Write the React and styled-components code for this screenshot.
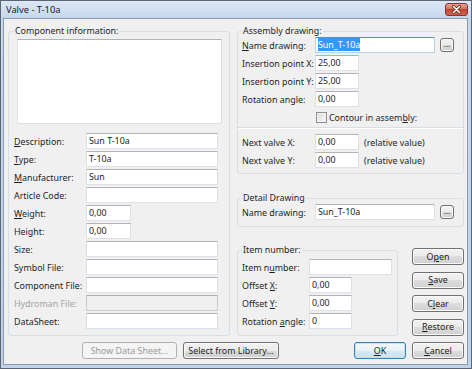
import styled, { createGlobalStyle } from 'styled-components';

const GlobalStyle = createGlobalStyle`
  html, body { margin: 0; padding: 0; background: #ffffff; }
  #root { width: 472px; height: 369px; }
`;

const Window = styled.div`
  box-sizing: border-box;
  width: 472px;
  height: 369px;
  display: flex;
  flex-direction: column;
  border: 1px solid #5b6573;
  background: linear-gradient(#dce7f4, #c6d7ec 18px, #bfd2ea);
  font-family: "Noto Sans", "Liberation Sans", sans-serif;
  font-size: 8.9px;
  color: #1e1e1e;
  overflow: hidden;
`;

const TitleBar = styled.div`
  height: 17px;
  flex: none;
  display: flex;
  align-items: flex-start;
  justify-content: space-between;
  padding: 0 3px 0 5px;
`;

const Title = styled.span`
  font-size: 9.3px;
  line-height: 17px;
  color: #1a1a1a;
`;

const CloseButton = styled.div`
  margin-top: 2px;
  width: 23px;
  height: 13px;
  box-sizing: border-box;
  border: 1px solid #83342c;
  border-radius: 3px;
  background: linear-gradient(#e8a493, #d46a57 50%, #c3432f 50%, #d0664f);
  display: flex;
  align-items: center;
  justify-content: center;
`;

const Client = styled.div`
  flex: 1;
  min-height: 0;
  margin: 0 3px 3px 2px;
  border: 1px solid #8a9bb0;
  background: #f0f0f0;
  padding: 6px 3px 5px 4px;
  display: flex;
  flex-direction: column;
`;

const TopArea = styled.div`
  flex: 1;
  display: flex;
  gap: 7px;
`;

const RightColumn = styled.div`
  flex: 1;
  display: flex;
  flex-direction: column;
`;

const Group = styled.fieldset`
  margin: ${p => p.$mt || 0}px 0 0 0;
  padding: 0;
  min-width: 0;
  box-sizing: border-box;
  width: ${p => (p.$w ? `${p.$w}px` : 'auto')};
  flex: ${p => (p.$grow ? 1 : 'none')};
  border: 1px solid #d5dfe5;
  border-radius: 3px;
`;

const Legend = styled.legend`
  margin-left: ${p => p.$offset}px;
  padding: 0 1px;
  line-height: 12px;
`;

const GroupBody = styled.div`
  padding: ${p => p.$pad};
  display: flex;
  flex-direction: column;
`;

const InfoBox = styled.div`
  margin: 0 0 9px 3px;
  width: 205px;
  height: 85px;
  box-sizing: border-box;
  background: #fff;
  border: 1px solid #dde1e7;
  border-top-color: #b0b3ba;
`;

const FormRows = styled.div`
  display: flex;
  flex-direction: column;
  gap: 2px;
`;

const Row = styled.div`
  display: flex;
  align-items: center;
  height: 16px;
  padding-left: ${p => p.$indent || 0}px;
`;

const Label = styled.span`
  flex: none;
  width: ${p => p.$w}px;
  white-space: nowrap;
  color: ${p => (p.$disabled ? '#a3a3a3' : 'inherit')};
`;

const TextBox = styled.div`
  flex: none;
  box-sizing: border-box;
  width: ${p => p.$w}px;
  height: 16px;
  padding: 0 2px;
  line-height: 14px;
  white-space: nowrap;
  overflow: hidden;
  background: ${p => (p.$disabled ? '#f0f0f0' : '#fff')};
  border: 1px solid ${p => (p.$focused ? '#b7d4ea' : p.$disabled ? '#c9cbcf' : '#dde1e7')};
  border-top-color: ${p => (p.$focused ? '#5a8fbd' : p.$disabled ? '#adb2b5' : '#b0b3ba')};
`;

const Selected = styled.span`
  background: #3399ff;
  color: #fff;
`;

const Note = styled.span`
  margin-left: 5px;
  white-space: nowrap;
`;

const Separator = styled.div`
  height: 1px;
  margin: 2px 0 6px -4px;
  background: #d5dfe5;
  box-shadow: 0 1px 0 #ffffff;
`;

const CheckBox = styled.span`
  flex: none;
  width: 11px;
  height: 11px;
  box-sizing: border-box;
  margin-right: 2px;
  border: 1px solid #8f8f8f;
  background: linear-gradient(135deg, #d9d9d9, #fbfbfb);
  box-shadow: inset 0 0 0 1px #f3f3f3;
`;

const Button = styled.button`
  flex: none;
  box-sizing: border-box;
  width: ${p => p.$w}px;
  height: 17px;
  margin: 0;
  padding: 0;
  font: inherit;
  line-height: 14px;
  white-space: nowrap;
  color: #1e1e1e;
  border: 1px solid #707070;
  border-radius: 3px;
  background: linear-gradient(#f2f2f2, #ebebeb 50%, #dddddd 50%, #cfcfcf);
  box-shadow: inset 0 0 0 1px #fbfbfb;

  &:disabled {
    color: #9a9a9a;
    border-color: #adb2b5;
    background: #f4f4f4;
    box-shadow: none;
  }
`;

const DefaultButton = styled(Button)`
  border-color: #3c7fb1;
  background: linear-gradient(#f3f8fb, #e9f2f8 50%, #d9e8f2 50%, #cde0ee);
  box-shadow: inset 0 0 0 1px #bfe3f7;
`;

const BrowseButton = styled(Button)`
  width: 14px;
  height: 14px;
  margin-left: 5px;
  font-size: 8px;
  line-height: 8px;
  padding-bottom: 3px;
`;

const ItemArea = styled.div`
  flex: 1;
  display: flex;
  justify-content: space-between;
  margin-top: 17px;
`;

const ButtonStack = styled.div`
  display: flex;
  flex-direction: column;
  gap: 6.5px;
  padding-top: 4px;
`;

const BottomBar = styled.div`
  flex: none;
  display: flex;
  align-items: center;
  gap: 6px;
  margin-top: 6px;
  padding-left: 74px;
`;

const Spacer = styled.div`
  flex: 1;
`;

const CloseIcon = () => (
  <svg width="11" height="9" viewBox="0 0 11 9">
    <path d="M2.5 1.5 L8.5 7.5 M8.5 1.5 L2.5 7.5" stroke="#5a1f18" strokeWidth="3" strokeLinecap="round" />
    <path d="M2.5 1.5 L8.5 7.5 M8.5 1.5 L2.5 7.5" stroke="#ffffff" strokeWidth="1.6" strokeLinecap="round" />
  </svg>
);

const componentFields = [
  { label: <><u>D</u>escription:</>, value: 'Sun T-10a', w: 132 },
  { label: <><u>T</u>ype:</>, value: 'T-10a', w: 132 },
  { label: <><u>M</u>anufacturer:</>, value: 'Sun', w: 132 },
  { label: 'Article Code:', value: '', w: 132 },
  { label: <><u>W</u>eight:</>, value: '0,00', w: 45 },
  { label: 'Height:', value: '0,00', w: 45 },
  { label: 'Size:', value: '', w: 132 },
  { label: 'Symbol File:', value: '', w: 132 },
  { label: 'Component File:', value: '', w: 132 },
  { label: 'Hydroman File:', value: '', w: 132, disabled: true },
  { label: 'DataSheet:', value: '', w: 132 },
];

const insertionFields = [
  { label: 'Insertion point X:', value: '25,00' },
  { label: 'Insertion point Y:', value: '25,00' },
  { label: 'Rotation angle:', value: '0,00' },
];

const itemFields = [
  { label: <>Item n<u>u</u>mber:</>, value: '', w: 83 },
  { label: <>Offset <u>X</u>:</>, value: '0,00', w: 43 },
  { label: <>Offset <u>Y</u>:</>, value: '0,00', w: 43 },
  { label: <>Rotation <u>a</u>ngle:</>, value: '0', w: 43 },
];

export default function App() {
  return (
    <>
      <GlobalStyle />
      <Window>
        <TitleBar>
          <Title>Valve - T-10a</Title>
          <CloseButton>
            <CloseIcon />
          </CloseButton>
        </TitleBar>
        <Client>
          <TopArea>
            <Group $w={222}>
              <Legend $offset={5}>Component information:</Legend>
              <GroupBody $pad="2px 7px 0 5px">
                <InfoBox />
                <FormRows>
                  {componentFields.map((f, i) => (
                    <Row key={i}>
                      <Label $w={72} $disabled={f.disabled}>{f.label}</Label>
                      <TextBox $w={f.w} $disabled={f.disabled}>{f.value}</TextBox>
                    </Row>
                  ))}
                </FormRows>
              </GroupBody>
            </Group>

            <RightColumn>
              <Group>
                <Legend $offset={4}>Assembly drawing:</Legend>
                <GroupBody $pad="0 0 5px 4px">
                  <FormRows>
                    <Row>
                      <Label $w={73}><u>N</u>ame drawing:</Label>
                      <TextBox $w={120} $focused>
                        <Selected>Sun_T-10a</Selected>
                      </TextBox>
                      <BrowseButton type="button">...</BrowseButton>
                    </Row>
                    {insertionFields.map(f => (
                      <Row key={f.label}>
                        <Label $w={73}>{f.label}</Label>
                        <TextBox $w={44}>{f.value}</TextBox>
                      </Row>
                    ))}
                    <Row $indent={74}>
                      <CheckBox />
                      <span>Contour in assem<u>b</u>ly:</span>
                    </Row>
                  </FormRows>
                  <Separator />
                  <FormRows>
                    <Row>
                      <Label $w={73}>Next valve X:</Label>
                      <TextBox $w={44}>0,00</TextBox>
                      <Note>(relative value)</Note>
                    </Row>
                    <Row>
                      <Label $w={73}>Next valve Y:</Label>
                      <TextBox $w={44}>0,00</TextBox>
                      <Note>(relative value)</Note>
                    </Row>
                  </FormRows>
                </GroupBody>
              </Group>

              <Group $mt={18}>
                <Legend $offset={4}>Detail Drawing</Legend>
                <GroupBody $pad="0 0 6px 4px">
                  <Row>
                    <Label $w={73}>Name drawing:</Label>
                    <TextBox $w={120}>Sun_T-10a</TextBox>
                    <BrowseButton type="button">...</BrowseButton>
                  </Row>
                </GroupBody>
              </Group>

              <ItemArea>
                <Group $w={161}>
                  <Legend $offset={4}>Item number:</Legend>
                  <GroupBody $pad="3px 0 4px 4px">
                    <FormRows>
                      {itemFields.map((f, i) => (
                        <Row key={i}>
                          <Label $w={67}>{f.label}</Label>
                          <TextBox $w={f.w}>{f.value}</TextBox>
                        </Row>
                      ))}
                    </FormRows>
                  </GroupBody>
                </Group>
                <ButtonStack>
                  <Button type="button" $w={52}>O<u>p</u>en</Button>
                  <Button type="button" $w={52}><u>S</u>ave</Button>
                  <Button type="button" $w={52}>C<u>l</u>ear</Button>
                  <Button type="button" $w={52}><u>R</u>estore</Button>
                </ButtonStack>
              </ItemArea>
            </RightColumn>
          </TopArea>

          <BottomBar>
            <Button type="button" $w={95} disabled>Show Data Sheet...</Button>
            <Button type="button" $w={96}>Select from Library...</Button>
            <Spacer />
            <DefaultButton type="button" $w={52}><u>O</u>K</DefaultButton>
            <Button type="button" $w={52}><u>C</u>ancel</Button>
          </BottomBar>
        </Client>
      </Window>
    </>
  );
}
